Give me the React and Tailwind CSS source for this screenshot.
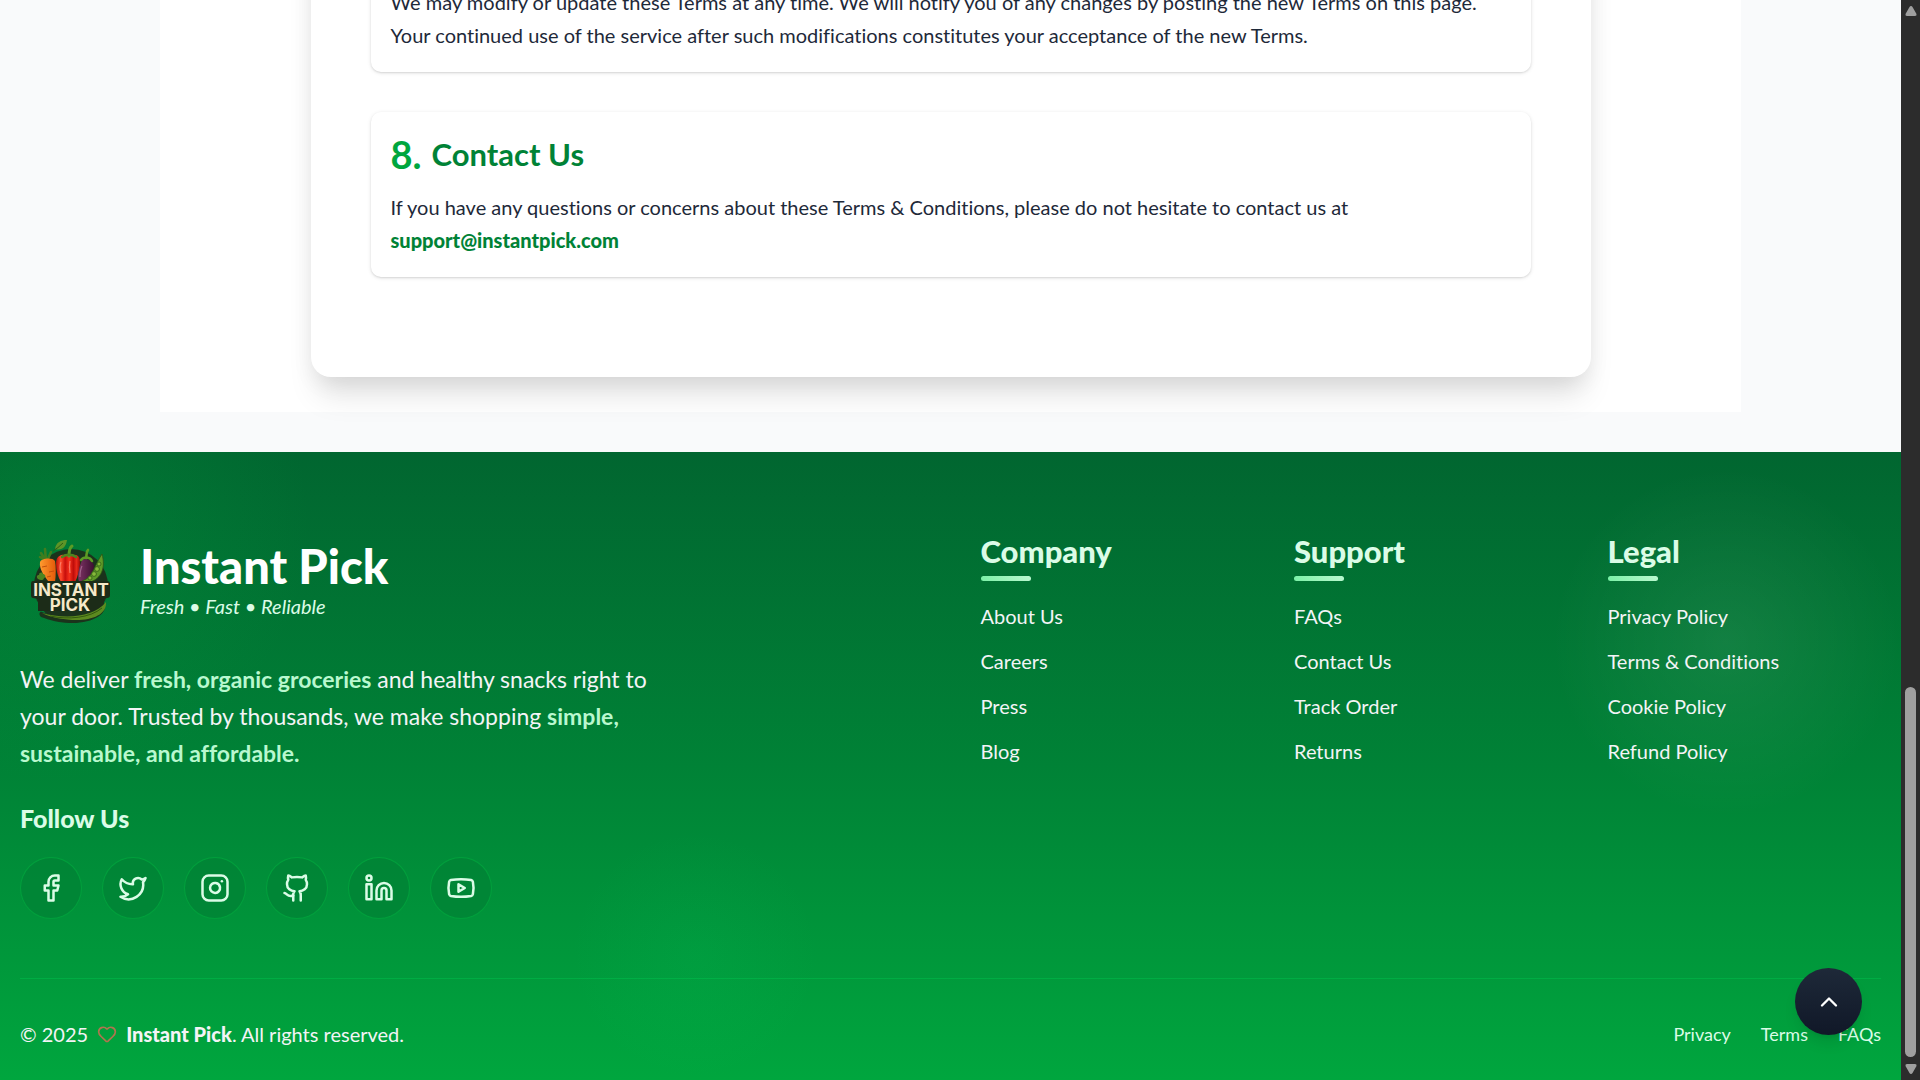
import { Facebook, Twitter, Instagram, Github, Linkedin, Youtube, Heart, ChevronUp } from "lucide-react";

const socials = [
  ["Facebook", Facebook],
  ["Twitter", Twitter],
  ["Instagram", Instagram],
  ["GitHub", Github],
  ["LinkedIn", Linkedin],
  ["YouTube", Youtube],
];

const columns = [
  ["Company", ["About Us", "Careers", "Press", "Blog"]],
  ["Support", ["FAQs", "Contact Us", "Track Order", "Returns"]],
  ["Legal", ["Privacy Policy", "Terms & Conditions", "Cookie Policy", "Refund Policy"]],
];

function Logo() {
  return (
    <svg viewBox="0 0 100 100" className="size-[100px] shrink-0" role="img" aria-label="Instant Pick logo">
      <defs>
        <linearGradient id="pepper" x1="0" x2="1">
          <stop offset="0" stopColor="#b80f0a" />
          <stop offset=".2" stopColor="#ff4a2c" />
          <stop offset=".38" stopColor="#c80e0b" />
          <stop offset=".55" stopColor="#f5301c" />
          <stop offset=".72" stopColor="#c00d0a" />
          <stop offset=".85" stopColor="#e8281a" />
          <stop offset="1" stopColor="#9d0906" />
        </linearGradient>
        <linearGradient id="carrot" x1="0" x2="1">
          <stop offset="0" stopColor="#ff9a2e" />
          <stop offset="1" stopColor="#e35a0a" />
        </linearGradient>
        <linearGradient id="eggplant" x1="0" x2="1">
          <stop offset="0" stopColor="#7c3263" />
          <stop offset="1" stopColor="#3d1031" />
        </linearGradient>
      </defs>
      <ellipse cx="51" cy="55" rx="37" ry="37" fill="#1b331c" />
      <path d="M35 18c1-7 6-9 12-9-1 7-5 11-12 9z" fill="#5d9427" />
      <path d="M33 20q5-3 10-8" stroke="#2f5d15" fill="none" />
      <path d="M26 30l-5-8M26 30l-1-12M27 30l4-9M26 30l-6-4" stroke="#3f7d1e" strokeWidth="2.600" strokeLinecap="round" />
      <path d="M20 31c1-4 13-5 15-1 1 6 1 14 0 21h-6c-5-6-10-13-9-20z" fill="url(#carrot)" />
      <path d="M22 36l5-1M29 41l5-1M27 46l4-1" stroke="#c44f0c" />
      <path d="M36 33c0-8 5-10 10-9 2-1 5-1 7 0 5-1 8 3 7 10-1 7-3 13-5 17H41c-3-5-5-12-5-18z" fill="url(#pepper)" />
      <path d="M41 31q-2 5 0 11M50 30q-1 5 0 12" stroke="#ff9480" strokeWidth="1.200" fill="none" opacity=".7" />
      <path d="M49 25c0-4 0-8 3-10" stroke="#5b9b25" strokeWidth="3" fill="none" strokeLinecap="round" />
      <path d="M42 26c4-3 10-3 14 0" stroke="#4e8420" strokeWidth="2.400" fill="none" strokeLinecap="round" />
      <path d="M62 29c5-2 11 1 12 6 0 9-7 16-15 16-2-7 0-14 3-22z" fill="url(#eggplant)" />
      <path d="M62 35c-2 4-2 7-2 11" stroke="#a0648b" strokeWidth="1.200" fill="none" />
      <path d="M66 27c1-3 0-6 2-8M61 29c3-4 9-3 11 1" stroke="#5b9b25" strokeWidth="2.600" fill="none" strokeLinecap="round" />
      <path d="M82 23c4 14-1 25-12 28-4 1-7 0-8-1 11-3 13-17 20-27z" fill="#5f9a28" stroke="#2c5514" strokeWidth=".8" />
      <g fill="#86b93a" stroke="#315c16" strokeWidth=".8">
        <circle cx="79" cy="33" r="2" />
        <circle cx="77" cy="38" r="2.400" />
        <circle cx="74" cy="43" r="2.400" />
        <circle cx="70" cy="47" r="2" />
      </g>
      <path d="M18 48c-2-2-1-4 1-4 0-3 4-3 4-1 3 0 3 4 1 4 0 2-3 3-6 1z" fill="#4c8421" />
      <path d="M13 50h74q3 0 3 3v11q0 3-3 3l-3 1v12H18V68l-5-1q-2 0-2-3V53q0-3 2-3z" fill="#1c2c18" />
      <path d="M22 81c20 9 50 5 62-9 5 10-10 20-32 20-12 0-23-3-31-6-3-3-1-6 1-5z" fill="#1b331c" />
      <path d="M22 82c22 6 52 5 64-11 1 13-15 19-34 18-12-1-22-3-30-7z" fill="#5c8a1f" />
      <path d="M30 85c18 4 40 2 52-8" stroke="#33580f" fill="none" />
      <text x="51" y="65" textAnchor="middle" fill="#f6e9c9" fontFamily="Inter, sans-serif" fontWeight="700" fontSize="17">INSTANT</text>
      <text x="50" y="80" textAnchor="middle" fill="#f6e9c9" fontFamily="Inter, sans-serif" fontWeight="700" fontSize="17">PICK</text>
    </svg>
  );
}

function ScrollArrow({ className }) {
  return (
    <svg viewBox="0 0 12 10" className={className} fill="#9f9f9f">
      <path d="M6 0Q7 0 7.500 1L11.500 8Q12 10 10 10H2Q0 10 .5 8L4.500 1Q5 0 6 0z" />
    </svg>
  );
}

function Scrollbar() {
  return (
    <div aria-hidden="true" className="fixed inset-y-0 right-0 flex w-[19px] flex-col items-center justify-between bg-[#2c2c2c] py-1.5">
      <ScrollArrow className="h-2.5 w-3" />
      <div className="flex w-[11px] flex-1 flex-col justify-end pb-[7px]">
        <div className="h-[370px] rounded-full bg-[#9f9f9f]" />
      </div>
      <ScrollArrow className="h-2.5 w-3 rotate-180" />
    </div>
  );
}

export default function App() {
  return (
    <div className="flex h-screen flex-col justify-end overflow-hidden bg-gray-50 pr-[19px] font-['Lato',sans-serif] [font-variant-ligatures:none]">
      <main className="mx-40 mb-10 bg-white pb-[35px]">
        <div className="mx-auto max-w-[1280px] rounded-[20px] bg-white p-[60px] pb-[100px] shadow-[0_25px_30px_-6px_rgba(0,0,0,0.1),0_8px_25px_-5px_rgba(0,0,0,0.1)]">
          <section className="rounded-[10px] p-5 text-[20px] leading-[33px] text-gray-800 shadow-[0_1px_4px_rgba(0,0,0,0.1),0_1px_2px_rgba(0,0,0,0.1)]">
            <p>
              We may modify or update these Terms at any time. We will notify you of any changes by posting the new Terms on this page.
              <br />
              Your continued use of the service after such modifications constitutes your acceptance of the new Terms.
            </p>
          </section>
          <section className="mt-10 rounded-[10px] p-5 text-[20px] leading-[33px] text-gray-800 shadow-[0_1px_4px_rgba(0,0,0,0.1),0_1px_2px_rgba(0,0,0,0.1)]">
            <h2 className="mb-[15px] flex items-center gap-2.5 text-[31px] leading-[44px] font-bold text-green-700">
              <span className="text-[38px] text-green-600">8.</span> Contact Us
            </h2>
            <p>
              If you have any questions or concerns about these Terms &amp; Conditions, please do not hesitate to contact us at
              <br />
              <a href="mailto:support@instantpick.com" className="font-black text-green-700">support@instantpick.com</a>
            </p>
          </section>
        </div>
      </main>

      <footer className="relative shrink-0 overflow-hidden bg-linear-to-b from-[#016630] via-[#008236] to-[#00a63e] px-5 pt-[79px] text-gray-100">
        <div className="absolute -top-[190px] -left-[210px] size-[520px] bg-[radial-gradient(closest-side,rgba(0,166,62,0.25),transparent)]" />
        <div className="absolute top-[15px] right-0 size-[350px] bg-[radial-gradient(closest-side,rgba(255,255,255,0.07),transparent)]" />
        <div className="absolute bottom-0 left-[30%] size-[250px] bg-[radial-gradient(closest-side,rgba(5,223,114,0.08),transparent)]" />
        <div className="relative grid grid-cols-2 gap-[60px]">
          <div>
            <div className="flex items-center gap-5">
              <Logo />
              <div>
                <p className="text-[47px] leading-[50px] font-black text-white">Instant Pick</p>
                <p className="text-[20px] leading-[30px] text-green-100 italic">Fresh • Fast • Reliable</p>
              </div>
            </div>
            <p className="mt-[30px] max-w-[640px] text-[23px] leading-[37px]">
              We deliver <strong className="font-bold text-green-200">fresh, organic groceries</strong> and healthy snacks right to
              <br />
              your door. Trusted by thousands, we make shopping <strong className="font-bold text-green-200">simple,<br />sustainable, and affordable.</strong>
            </p>
            <h3 className="mt-[29px] text-[25px] leading-[35px] font-black text-green-100">Follow Us</h3>
            <div className="mt-[21px] flex gap-5">
              {socials.map(([name, Icon]) => (
                <a key={name} href="#" aria-label={name} className="flex size-[62px] items-center justify-center rounded-full border border-green-600/80 bg-green-700/70 text-green-100">
                  <Icon size={30} />
                </a>
              ))}
            </div>
          </div>
          <div className="grid grid-cols-3 gap-10">
            {columns.map(([title, links]) => (
              <nav key={title} aria-label={title}>
                <h3 className="text-[31px] leading-10 font-black text-green-100">{title}</h3>
                <div className="mt-[5px] h-[5px] w-[50px] rounded-full bg-linear-to-r from-green-300 to-green-200" />
                <ul className="mt-5 flex flex-col gap-[15px]">
                  {links.map((l) => (
                    <li key={l} className="text-[20px] leading-[30px]"><a href="#">{l}</a></li>
                  ))}
                </ul>
              </nav>
            ))}
          </div>
        </div>
        <div className="relative mt-[59px] flex items-center justify-between border-t border-green-500/40 pt-10 pb-[31px]">
          <p className="flex items-center text-[20px] leading-[30px]">
            © 2025 <Heart size={20} strokeWidth={2} className="mx-[9px] text-[#b0744f]" />
            <span><strong className="font-black">Instant Pick</strong>. All rights reserved.</span>
          </p>
          <nav aria-label="Footer" className="flex gap-[30px] text-[18px] leading-[25px] text-green-100">
            <a href="#">Privacy</a>
            <a href="#">Terms</a>
            <a href="#">FAQs</a>
          </nav>
        </div>
      </footer>

      <button type="button" aria-label="Back to top" className="fixed right-[58px] bottom-[45px] flex size-[67px] items-center justify-center rounded-full bg-linear-to-b from-gray-800 to-gray-900 text-white shadow-lg">
        <ChevronUp size={28} />
      </button>
      <Scrollbar />
    </div>
  );
}
